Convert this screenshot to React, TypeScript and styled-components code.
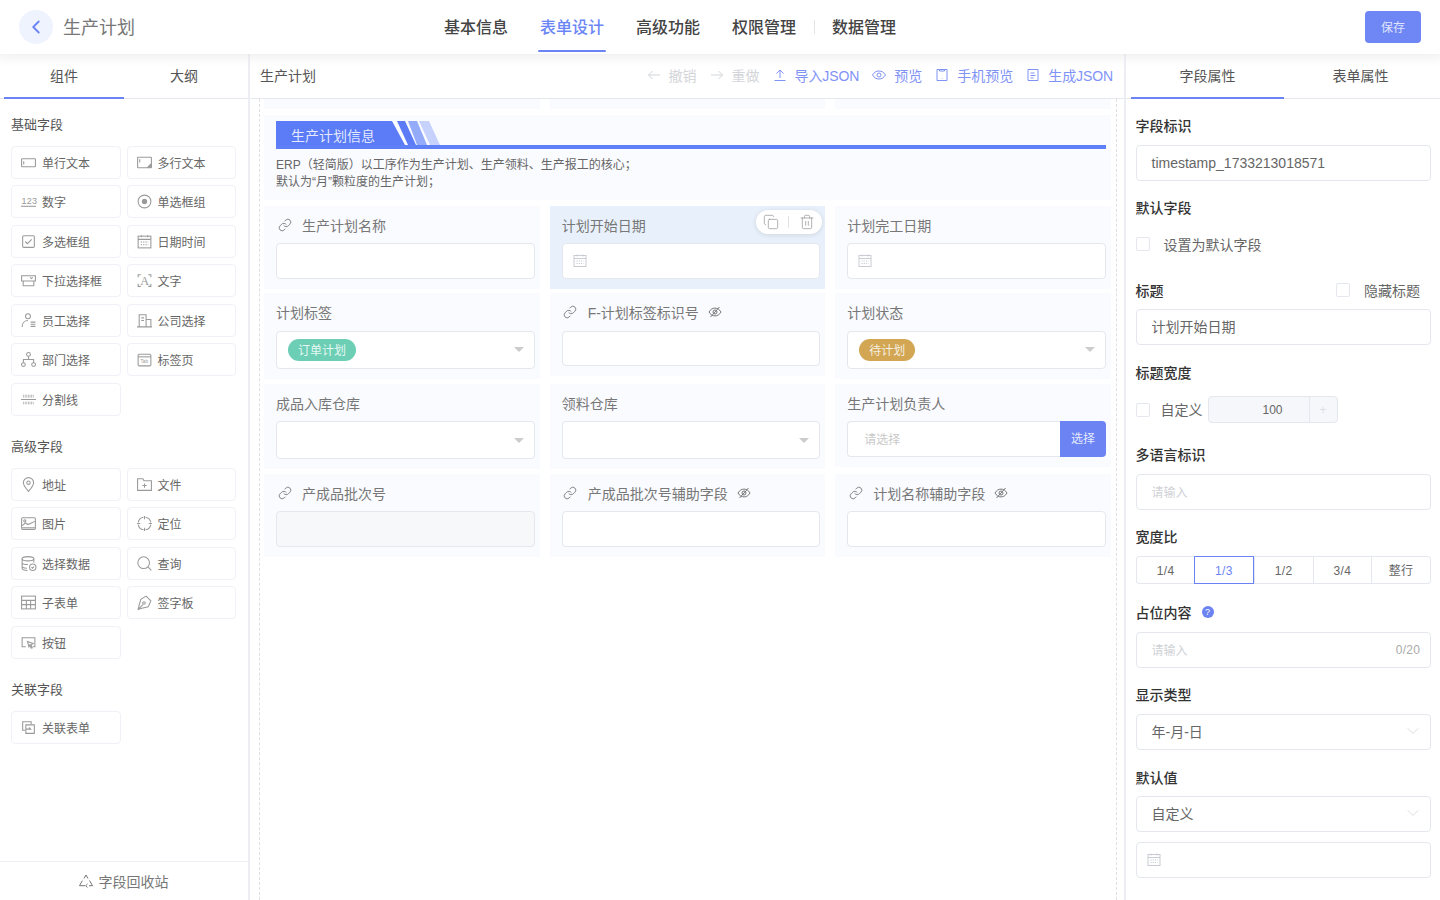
import React from "react";
import styled, { createGlobalStyle } from "styled-components";
import { ChevronLeft, ChevronDown, Link as LinkIcon, Copy, Trash2 } from "lucide-react";

const Global = createGlobalStyle`
  html, body { margin: 0; padding: 0; height: 100%; background: #fff; overflow: hidden; }
  body { font-family: "Liberation Sans", "Noto Sans CJK SC", sans-serif; color: #555; }
  * { box-sizing: border-box; }
`;

const PRIMARY = "#6b83f3";
const LINE = "#e5e7ee";

const Page = styled.div`
  height: 900px;
  display: flex;
  flex-direction: column;
  overflow: hidden;
`;
const Header = styled.header`
  height: 54px;
  flex: none;
  display: flex;
  align-items: center;
  padding: 0 19px;
  background: #fff;
  position: relative;
  z-index: 2;
  box-shadow: 0 2px 10px rgba(0, 0, 0, 0.04);
`;
const BackButton = styled.div`
  width: 34px;
  height: 34px;
  border-radius: 50%;
  background: #eef3fe;
  color: ${PRIMARY};
  display: flex;
  align-items: center;
  justify-content: center;
`;
const PageTitle = styled.div`
  margin: -2px 0 0 10px;
  font-size: 18px;
  color: #777;
  width: 73px;
`;
const Nav = styled.nav`
  margin-left: 308px;
  display: flex;
  align-items: center;
  gap: 32px;
  height: 54px;
`;
const NavTab = styled.div<{ $active?: boolean }>`
  position: relative;
  height: 54px;
  padding-top: 1px;
  font-size: 16px;
  font-weight: 500;
  line-height: 53px;
  color: ${(p) => (p.$active ? "#6a85f5" : "#444")};
  &::after {
    content: "";
    display: ${(p) => (p.$active ? "block" : "none")};
    position: absolute;
    left: -2px;
    right: -2px;
    bottom: 2px;
    height: 2px;
    border-radius: 1px;
    background: ${PRIMARY};
  }
`;
const NavDivider = styled.i`
  width: 1px;
  height: 14px;
  margin: 0 -14.5px;
  background: #e4e4e4;
`;
const SaveButton = styled.div`
  margin-left: auto;
  width: 56px;
  height: 32px;
  padding-bottom: 2px;
  border-radius: 4px;
  background: #6f87f4;
  color: rgba(255, 255, 255, 0.8);
  font-size: 12px;
  display: flex;
  align-items: center;
  justify-content: center;
`;
const Body = styled.div`
  flex: 1;
  display: flex;
  min-height: 0;
`;
const LeftPanel = styled.aside`
  width: 250px;
  flex: none;
  display: flex;
  flex-direction: column;
  border-right: 2px solid #eceef3;
`;
const TabBar = styled.div<{ $pad: number }>`
  height: 45px;
  flex: none;
  display: flex;
  padding-left: ${(p) => p.$pad}px;
  border-bottom: 1px solid ${LINE};
  background: linear-gradient(#f8f8f8, #fff 30%);
`;
const PanelTab = styled.div<{ $active?: boolean; $w: number }>`
  width: ${(p) => p.$w}px;
  height: 45px;
  line-height: 44px;
  text-align: center;
  font-size: 14px;
  color: #555;
  border-bottom: 2px solid ${(p) => (p.$active ? PRIMARY : "transparent")};
`;
const Palette = styled.div`
  flex: 1;
  padding: 16px 11px 0;
`;
const GroupTitle = styled.div`
  font-size: 13px;
  line-height: 20px;
  color: #555;
  margin-bottom: 10.7px;
`;
const Items = styled.div`
  display: grid;
  grid-template-columns: 110px 109.5px;
  column-gap: 5.5px;
  row-gap: 6.5px;
  margin-bottom: 21.3px;
`;
const Item = styled.div`
  height: 33px;
  border: 1px solid #f0f1f6;
  border-radius: 4px;
  display: flex;
  align-items: center;
  padding-left: 8px;
  gap: 5px;
  font-size: 12px;
  color: #666;
`;
const Trash = styled.div`
  height: 39px;
  flex: none;
  padding-right: 2px;
  border-top: 1px solid #eceef3;
  display: flex;
  align-items: center;
  justify-content: center;
  gap: 5px;
  font-size: 14px;
  color: #777;
`;
const Center = styled.main`
  width: 876px;
  flex: none;
  display: flex;
  flex-direction: column;
  border-right: 2px solid #eceef3;
`;
const Toolbar = styled.div`
  height: 45px;
  flex: none;
  display: flex;
  align-items: center;
  padding: 0 11px 2px 10px;
  border-bottom: 1px solid ${LINE};
  background: linear-gradient(#f8f8f8, #fff 30%);
`;
const ToolbarTitle = styled.div`
  font-size: 14px;
  color: #555;
  margin-right: auto;
`;
const Action = styled.div<{ $off?: boolean; $tight?: boolean }>`
  display: flex;
  align-items: center;
  gap: 8px;
  margin-left: 13px;
  font-size: 14px;
  letter-spacing: ${(p) => (p.$tight ? "-0.1px" : "0")};
  color: ${(p) => (p.$off ? "#d3d5d9" : "#7f93f6")};
`;
const CanvasWrap = styled.div`
  flex: 1;
  margin-left: 9px;
  padding: 0 5px 0 4px;
  border-left: 1px dashed #dfdfe3;
  border-right: 1px dashed #dfdfe3;
  display: flex;
  flex-direction: column;
  gap: 5.3px;
  width: 858px;
`;
const FormGrid = styled.div`
  display: grid;
  grid-template-columns: repeat(3, 1fr);
  column-gap: 10px;
  row-gap: 4.8px;
  align-items: start;
`;
const StubCell = styled.div`
  height: 10.3px;
  background: #fafbff;
`;
const Section = styled.section`
  height: 85.7px;
  padding: 6.5px 5px 0 12px;
  background: #fafbff;
`;
const Banner = styled.div`
  display: flex;
  height: 28px;
  border-bottom: 4px solid #5f7ff7;
`;
const BannerTitle = styled.div`
  width: 116px;
  height: 24px;
  background: #5b7cf6;
  color: rgba(255, 255, 255, 0.85);
  font-size: 14px;
  line-height: 30px;
  padding-left: 15px;
  white-space: nowrap;
  overflow: hidden;
`;
const Desc = styled.div`
  margin-top: 8px;
  font-size: 12px;
  line-height: 17px;
  color: #666;
`;
const Cell = styled.div<{ $active?: boolean }>`
  padding: 9px 5px 10px 12px;
  position: relative;
  background: ${(p) => (p.$active ? "#e8f1fb" : "#fafbff")};
`;
const CellLabel = styled.div`
  display: flex;
  align-items: center;
  height: 20px;
  margin-bottom: 8.5px;
  font-size: 14px;
  color: #777;
  svg.link {
    margin: 0 10.5px 0 1.5px;
    color: #777;
  }
  svg.hide {
    margin-left: 9px;
    color: #777;
  }
`;
const FieldBox = styled.div<{ $h?: number; $disabled?: boolean }>`
  height: ${(p) => p.$h ?? 35.5}px;
  background: ${(p) => (p.$disabled ? "#f7f8f9" : "#fff")};
  border: 1px solid ${LINE};
  border-radius: 4px;
  display: flex;
  align-items: center;
  padding-left: 11px;
  position: relative;
  color: #c9ccd2;
  svg {
    margin-left: -1px;
  }
`;
const Caret = styled.i`
  position: absolute;
  right: 10px;
  top: 50%;
  margin-top: -2.5px;
  border-left: 5px solid transparent;
  border-right: 5px solid transparent;
  border-top: 5px solid #ccc;
`;
const Tag = styled.span<{ $color: string }>`
  height: 22px;
  line-height: 24px;
  padding: 0 10px;
  border-radius: 11px;
  background: ${(p) => p.$color};
  color: rgba(255, 255, 255, 0.85);
  font-size: 12px;
`;
const PickerRow = styled.div`
  display: flex;
  height: 36px;
`;
const PickerInput = styled.div`
  flex: 1;
  background: #fff;
  border: 1px solid ${LINE};
  border-right: 0;
  border-radius: 4px 0 0 4px;
  font-size: 12px;
  line-height: 36px;
  padding-left: 16px;
  color: #c9c9c9;
`;
const PickerButton = styled.div`
  width: 46px;
  background: ${PRIMARY};
  color: rgba(255, 255, 255, 0.85);
  font-size: 12px;
  line-height: 37.5px;
  text-align: center;
  border-radius: 0 4px 4px 0;
`;
const FloatTools = styled.div`
  position: absolute;
  top: 4px;
  right: 3.5px;
  width: 66px;
  height: 24px;
  border-radius: 12px;
  background: #fff;
  box-shadow: 0 1px 5px rgba(0, 0, 0, 0.12);
  display: flex;
  align-items: center;
  justify-content: center;
  gap: 9.5px;
  color: #8d8d8d;
  &::before {
    content: "";
    order: 1;
    width: 1px;
    height: 12px;
    background: #e2e2e2;
  }
  svg:last-child {
    order: 2;
  }
`;
const RightPanel = styled.aside`
  flex: 1;
  display: flex;
  flex-direction: column;
  min-width: 0;
`;
const Props = styled.div`
  padding: 18px 9px 0 9.5px;
`;
const PropItem = styled.div<{ $gap?: number }>`
  margin-bottom: ${(p) => p.$gap ?? 18.2}px;
`;
const PropLabel = styled.div`
  display: flex;
  align-items: center;
  height: 20px;
  padding-bottom: 3.5px;
  margin-bottom: 8px;
  font-size: 14px;
  font-weight: 500;
  color: #333;
`;
const PropInput = styled.div<{ $placeholder?: boolean; $latin?: boolean }>`
  height: 36px;
  border: 1px solid ${LINE};
  border-radius: 4px;
  display: flex;
  align-items: center;
  justify-content: space-between;
  padding: 0 11px ${(p) => (p.$latin ? 0 : 2)}px 15px;
  font-size: ${(p) => (p.$placeholder ? 12 : 14)}px;
  color: ${(p) => (p.$placeholder ? "#cfd1d6" : "#666")};
  svg.chev {
    color: #c9ccd2;
    margin-right: -4px;
  }
`;
const Counter = styled.span`
  font-size: 12px;
  letter-spacing: 0.2px;
  color: #aaa;
  margin-right: -1px;
`;
const Check = styled.i`
  display: block;
  flex: none;
  width: 14px;
  height: 14px;
  border: 1px solid ${LINE};
  border-radius: 2px;
`;
const CheckRow = styled.div`
  height: 36px;
  padding-bottom: 2px;
  display: flex;
  align-items: center;
  gap: 14px;
  font-size: 14px;
  color: #666;
`;
const HideTitle = styled.div`
  margin-left: auto;
  margin-right: 11px;
  display: flex;
  align-items: center;
  gap: 14px;
  font-size: 14px;
  font-weight: 400;
  color: #666;
`;
const WidthRow = styled.div`
  height: 36px;
  display: flex;
  align-items: center;
  font-size: 14px;
  color: #666;
`;
const WidthText = styled.span`
  margin: -1px 5px 0 11px;
`;
const NumberBox = styled.div`
  width: 130px;
  height: 27px;
  border: 1px solid ${LINE};
  border-radius: 4px;
  background: #f6f7fa;
  display: flex;
  font-size: 12px;
  color: #666;
  line-height: 26px;
`;
const NumberValue = styled.div`
  flex: 1;
  text-align: center;
  padding-left: 28px;
`;
const NumberPlus = styled.div`
  width: 28px;
  border-left: 1px solid ${LINE};
  text-align: center;
  color: #dcdfe6;
`;
const Segments = styled.div`
  display: flex;
  height: 28px;
  border: 1px solid ${LINE};
  border-radius: 3px;
`;
const Segment = styled.div<{ $active?: boolean }>`
  flex: 1;
  margin: -1px 0;
  font-size: 12px;
  letter-spacing: 0.4px;
  line-height: 28px;
  text-align: center;
  color: ${(p) => (p.$active ? PRIMARY : "#666")};
  border: 1px solid ${(p) => (p.$active ? PRIMARY : "transparent")};
  border-left-color: ${(p) => (p.$active ? PRIMARY : LINE)};
  border-right-width: ${(p) => (p.$active ? 1 : 0)}px;
  &:first-child {
    flex: 0 0 57.5px;
    border-left-color: transparent;
  }
`;
const Help = styled.i`
  margin-left: 10px;
  width: 12px;
  height: 12px;
  border-radius: 50%;
  background: ${PRIMARY};
  color: #fff;
  font-size: 9px;
  font-style: normal;
  line-height: 12px;
  text-align: center;
`;
const DateBox = styled(PropInput)`
  padding: 0 0 0 10px;
  margin-top: -9px;
  color: #c9ccd2;
`;

const Svg = styled.svg<{ $size?: number }>`
  width: ${(p) => p.$size ?? 16}px;
  height: ${(p) => p.$size ?? 16}px;
  flex: none;
  fill: none;
  stroke: currentColor;
  stroke-width: 1;
`;
const ItemIcon = styled(Svg)`
  width: 17px;
  height: 17px;
  color: #9a9a9a;
  overflow: visible;
`;
const IconText = styled.text<{ $size: number; $serif?: boolean }>`
  font-size: ${(p) => p.$size}px;
  font-family: ${(p) => (p.$serif ? '"Liberation Serif", serif' : '"Liberation Sans", sans-serif')};
  fill: currentColor;
  stroke: none;
`;

const calendarPaths = (
  <>
    <rect x="2" y="3" width="12" height="11" />
    <path d="M2 6h12M5 2v2M11 2v2" />
    <path d="M4.500 8.500h7M4.500 11h7" strokeDasharray="1.2 1" />
  </>
);

const ICONS: Record<string, React.ReactNode> = {
  single: (
    <>
      <rect x="1.5" y="4.5" width="13" height="7.5" rx="0.5" />
      <path d="M3.5 6.8v3" />
    </>
  ),
  multi: (
    <>
      <rect x="1.5" y="3" width="13" height="10" rx="0.5" />
      <path d="M3.500 5v3" />
      <path d="M11 12.500l3-3v3z" fill="currentColor" />
    </>
  ),
  number: (
    <>
      <IconText x="1.500" y="10.500" $size={8.5} letterSpacing="0.2">123</IconText>
      <path d="M1 12.500h14" />
    </>
  ),
  check: (
    <>
      <rect x="2.5" y="2.5" width="11" height="11" rx="1" />
      <path d="M5 8l2 2 4-4" />
    </>
  ),
  radio: (
    <>
      <circle cx="8" cy="8" r="6" />
      <circle cx="8" cy="8" r="2" fill="currentColor" />
    </>
  ),
  calendar: calendarPaths,
  select: <path d="M1.500 3.500h13v5h-13zM3 8.500v4.500h10v-4.500M9.500 5l1.300 1.200L12 5" />,
  text: (
    <>
      <path d="M2 5V2.500h2.500M11.500 2.500H14V5M14 11v2.500h-2.500M4.500 13.500H2V11" />
      <IconText x="3.900" y="12.300" $size={11.5} $serif>A</IconText>
    </>
  ),
  user: (
    <>
      <circle cx="7.500" cy="4" r="2.300" />
      <path d="M2 14c0-3.500 2.300-6 5.500-6M10 9.500h4.500M10 11.500h4.500M10 13.500h4.500" />
    </>
  ),
  company: <path d="M1 14h14M3 14V2.500h6.500V14M9.500 7H14v7M5 5.500h2.500M5 8h2.500" />,
  org: (
    <>
      <circle cx="8" cy="3.200" r="1.800" />
      <circle cx="3.200" cy="12.800" r="1.800" />
      <circle cx="12.800" cy="12.800" r="1.800" />
      <path d="M8 5v3M3.200 11V8h9.600v3" />
    </>
  ),
  tab: (
    <>
      <rect x="2" y="3" width="12" height="11" rx="1" />
      <path d="M2 5.500h12" />
      <IconText x="4.200" y="11.500" $size={4.5}>Tab</IconText>
    </>
  ),
  divider: (
    <>
      <path d="M3 4h10M3 5.500h10M3 10.500h10M3 12h10" strokeDasharray="0.8 0.7" />
      <path d="M1 8h14" />
    </>
  ),
  pin: (
    <>
      <path d="M8 14.500C5.500 11.500 3.200 9 3.200 6.300a4.800 4.800 0 0 1 9.600 0C12.800 9 10.500 11.500 8 14.500z" />
      <circle cx="8" cy="6.300" r="1.600" />
    </>
  ),
  folder: <path d="M1.500 13.500V2.500h5l1 2h7v9zM8 7v4M6 9h4" />,
  image: (
    <>
      <rect x="1.500" y="2.500" width="13" height="11" rx="1" />
      <circle cx="4.500" cy="5.500" r="1" />
      <path d="M2 10l3-2.500 2.500 1.500L14 6M2 12h12" />
    </>
  ),
  locate: <path d="M7 2.100A6 6 0 0 0 2.100 7M9 2.100A6 6 0 0 1 13.900 7M13.900 9A6 6 0 0 1 9 13.900M7 13.900A6 6 0 0 1 2.100 9M8 1v3M8 12v3M1 8h3M12 8h3" />,
  data: (
    <>
      <ellipse cx="7.500" cy="3.500" rx="5.500" ry="2" />
      <path d="M2 3.500v9c0 1.200 2.500 2 5 2M13 3.500V7M2 7c0 1.200 2.500 2 5.500 2M2 10.500c0 1 2 1.800 4.500 1.900" />
      <circle cx="12" cy="11.500" r="3" />
      <path d="M10.800 11.500l1 1 1.400-1.500" />
    </>
  ),
  search: (
    <>
      <circle cx="7.200" cy="7.200" r="5.500" />
      <path d="M11.200 11.200l3.300 3.300" />
    </>
  ),
  table: (
    <>
      <rect x="1.500" y="2" width="13" height="12" />
      <path d="M1.500 6h13M1.500 10h13M6 6v8M10 6v8" />
    </>
  ),
  pen: (
    <>
      <path d="M9.500 2l4.500 4.500-2.500 5.500-6 1.500L2 14.500l1-4 1.500-5.500zM2.500 14l4-4" />
      <circle cx="7.500" cy="8.500" r="1.200" />
    </>
  ),
  button: (
    <>
      <path d="M5.500 12H2V3.500h12V12h-2" />
      <path d="M7 7l5.500 2-2.200 1 1.200 3-1 .3-1.200-3L8.400 12z" />
    </>
  ),
  relate: (
    <>
      <path d="M5 10.500H2.500v-8h8V5" />
      <path d="M5.500 5.500h8v8h-8zM5.500 9.500H10l-1.500-1.500" />
    </>
  ),
};

const Icon = ({ name }: { name: string }) => <ItemIcon viewBox="0 0 16 16">{ICONS[name]}</ItemIcon>;

const ToolIcon = ({ d, children }: { d?: string; children?: React.ReactNode }) => (
  <Svg viewBox="0 0 14 14" $size={14}>
    {d && <path d={d} />}
    {children}
  </Svg>
);
const HiddenEye = () => (
  <Svg className="hide" viewBox="0 0 14 14" $size={14}>
    <path d="M1 7c1.500-2.600 3.600-3.900 6-3.900s4.500 1.300 6 3.900c-1.500 2.600-3.600 3.900-6 3.900S2.500 9.600 1 7z" />
    <circle cx="7" cy="7" r="2" />
    <path d="M2.500 12L11.500 2" />
  </Svg>
);
const Recycle = () => (
  <Svg viewBox="0 0 16 16" $size={16}>
    <path d="M6 5.500l2-3.500 2 3.500M11.500 7.500l3 5.200H11M7 12.700H1.500l2.800-5M9.500 11l-1.800 1.700 1.800 1.600" />
  </Svg>
);
const Calendar = () => (
  <Svg viewBox="1 1.500 14 14" $size={14}>
    {calendarPaths}
  </Svg>
);

const BannerArt = () => (
  <svg width="50" height="24" viewBox="0 0 50 24" style={{ flex: "none" }}>
    <polygon points="0,0 13,24 0,24" fill="#5b7cf6" />
    <polygon points="5,0 13,0 24,24 16,24" fill="#5b7cf6" />
    <polygon points="16,0 25,0 35,24 25,24" fill="#94abf9" />
    <polygon points="27,0 37,0 48,24 38,24" fill="#c6d2fc" />
  </svg>
);

const BASIC: [string, string][] = [
  ["single", "单行文本"], ["multi", "多行文本"], ["number", "数字"], ["radio", "单选框组"],
  ["check", "多选框组"], ["calendar", "日期时间"], ["select", "下拉选择框"], ["text", "文字"],
  ["user", "员工选择"], ["company", "公司选择"], ["org", "部门选择"], ["tab", "标签页"], ["divider", "分割线"],
];
const ADVANCED: [string, string][] = [
  ["pin", "地址"], ["folder", "文件"], ["image", "图片"], ["locate", "定位"], ["data", "选择数据"],
  ["search", "查询"], ["table", "子表单"], ["pen", "签字板"], ["button", "按钮"],
];
const RELATED: [string, string][] = [["relate", "关联表单"]];
const GROUPS: [string, [string, string][]][] = [["基础字段", BASIC], ["高级字段", ADVANCED], ["关联字段", RELATED]];

const Label = ({ text, link, hidden }: { text: string; link?: boolean; hidden?: boolean }) => (
  <CellLabel>
    {link && <LinkIcon className="link" size={14} strokeWidth={1.5} />}
    {text}
    {hidden && <HiddenEye />}
  </CellLabel>
);

export default function App() {
  return (
    <Page>
      <Global />
      <Header>
        <BackButton>
          <ChevronLeft size={22} strokeWidth={2} />
        </BackButton>
        <PageTitle>生产计划</PageTitle>
        <Nav>
          <NavTab>基本信息</NavTab>
          <NavTab $active>表单设计</NavTab>
          <NavTab>高级功能</NavTab>
          <NavTab>权限管理</NavTab>
          <NavDivider />
          <NavTab>数据管理</NavTab>
        </Nav>
        <SaveButton>保存</SaveButton>
      </Header>
      <Body>
        <LeftPanel>
          <TabBar $pad={4}>
            <PanelTab $active $w={120}>组件</PanelTab>
            <PanelTab $w={120}>大纲</PanelTab>
          </TabBar>
          <Palette>
            {GROUPS.map(([title, items]) => (
              <div key={title}>
                <GroupTitle>{title}</GroupTitle>
                <Items>
                  {items.map(([icon, text]) => (
                    <Item key={text}>
                      <Icon name={icon} />
                      {text}
                    </Item>
                  ))}
                </Items>
              </div>
            ))}
          </Palette>
          <Trash>
            <Recycle />
            字段回收站
          </Trash>
        </LeftPanel>
        <Center>
          <Toolbar>
            <ToolbarTitle>生产计划</ToolbarTitle>
            <Action $off><ToolIcon d="M13 7H1.500M5.500 3l-4 4 4 4" />撤销</Action>
            <Action $off><ToolIcon d="M1 7h11.500M8.500 3l4 4-4 4" />重做</Action>
            <Action $tight><ToolIcon d="M1.500 12.500h11M7 10V2M3.500 5.500L7 2l3.500 3.500" />导入JSON</Action>
            <Action>
              <ToolIcon d="M.5 7c1.600-2.700 3.800-4 6.500-4s4.900 1.300 6.500 4c-1.600 2.700-3.800 4-6.500 4S2.100 9.700.5 7z">
                <circle cx="7" cy="7" r="2" />
              </ToolIcon>
              预览
            </Action>
            <Action><ToolIcon d="M2 1.500h10v11H2zM4.500 1.500V3h5V1.500M7 10.500v.5" />手机预览</Action>
            <Action $tight><ToolIcon d="M2 1.500h10v11H2zM4.500 5h4M4.500 7.500h5M4.500 10h3" />生成JSON</Action>
          </Toolbar>
          <CanvasWrap>
            <FormGrid>
              <StubCell />
              <StubCell />
              <StubCell />
            </FormGrid>
            <Section>
              <Banner>
                <BannerTitle>生产计划信息</BannerTitle>
                <BannerArt />
              </Banner>
              <Desc>
                ERP（轻简版）以工序作为生产计划、生产领料、生产报工的核心；
                <br />
                默认为“月”颗粒度的生产计划；
              </Desc>
            </Section>
            <FormGrid>
              <Cell>
                <Label text="生产计划名称" link />
                <FieldBox />
              </Cell>
              <Cell $active>
                <Label text="计划开始日期" />
                <FieldBox><Calendar /></FieldBox>
                <FloatTools>
                  <Copy size={16} strokeWidth={1} />
                  <Trash2 size={16} strokeWidth={1} />
                </FloatTools>
              </Cell>
              <Cell>
                <Label text="计划完工日期" />
                <FieldBox><Calendar /></FieldBox>
              </Cell>
              <Cell>
                <Label text="计划标签" />
                <FieldBox $h={38}>
                  <Tag $color="#6ccfb5">订单计划</Tag>
                  <Caret />
                </FieldBox>
              </Cell>
              <Cell>
                <Label text="F-计划标签标识号" link hidden />
                <FieldBox />
              </Cell>
              <Cell>
                <Label text="计划状态" />
                <FieldBox $h={38}>
                  <Tag $color="#d2a653">待计划</Tag>
                  <Caret />
                </FieldBox>
              </Cell>
              <Cell>
                <Label text="成品入库仓库" />
                <FieldBox $h={38}><Caret /></FieldBox>
              </Cell>
              <Cell>
                <Label text="领料仓库" />
                <FieldBox $h={38}><Caret /></FieldBox>
              </Cell>
              <Cell>
                <Label text="生产计划负责人" />
                <PickerRow>
                  <PickerInput>请选择</PickerInput>
                  <PickerButton>选择</PickerButton>
                </PickerRow>
              </Cell>
              <Cell>
                <Label text="产成品批次号" link />
                <FieldBox $disabled />
              </Cell>
              <Cell>
                <Label text="产成品批次号辅助字段" link hidden />
                <FieldBox />
              </Cell>
              <Cell>
                <Label text="计划名称辅助字段" link hidden />
                <FieldBox />
              </Cell>
            </FormGrid>
          </CanvasWrap>
        </Center>
        <RightPanel>
          <TabBar $pad={5}>
            <PanelTab $active $w={153}>字段属性</PanelTab>
            <PanelTab $w={153}>表单属性</PanelTab>
          </TabBar>
          <Props>
            <PropItem>
              <PropLabel>字段标识</PropLabel>
              <PropInput $latin>timestamp_1733213018571</PropInput>
            </PropItem>
            <PropItem>
              <PropLabel>默认字段</PropLabel>
              <CheckRow><Check />设置为默认字段</CheckRow>
            </PropItem>
            <PropItem>
              <PropLabel>
                标题
                <HideTitle><Check />隐藏标题</HideTitle>
              </PropLabel>
              <PropInput>计划开始日期</PropInput>
            </PropItem>
            <PropItem>
              <PropLabel>标题宽度</PropLabel>
              <WidthRow>
                <Check />
                <WidthText>自定义</WidthText>
                <NumberBox>
                  <NumberValue>100</NumberValue>
                  <NumberPlus>+</NumberPlus>
                </NumberBox>
              </WidthRow>
            </PropItem>
            <PropItem>
              <PropLabel>多语言标识</PropLabel>
              <PropInput $placeholder $latin>请输入</PropInput>
            </PropItem>
            <PropItem $gap={20}>
              <PropLabel>宽度比</PropLabel>
              <Segments>
                <Segment>1/4</Segment>
                <Segment $active>1/3</Segment>
                <Segment>1/2</Segment>
                <Segment>3/4</Segment>
                <Segment>整行</Segment>
              </Segments>
            </PropItem>
            <PropItem>
              <PropLabel>占位内容<Help>?</Help></PropLabel>
              <PropInput $placeholder $latin>请输入<Counter>0/20</Counter></PropInput>
            </PropItem>
            <PropItem>
              <PropLabel>显示类型</PropLabel>
              <PropInput>年-月-日<ChevronDown className="chev" size={20} strokeWidth={0.8} /></PropInput>
            </PropItem>
            <PropItem>
              <PropLabel>默认值</PropLabel>
              <PropInput>自定义<ChevronDown className="chev" size={20} strokeWidth={0.8} /></PropInput>
            </PropItem>
            <DateBox $latin><Calendar /></DateBox>
          </Props>
        </RightPanel>
      </Body>
    </Page>
  );
}
